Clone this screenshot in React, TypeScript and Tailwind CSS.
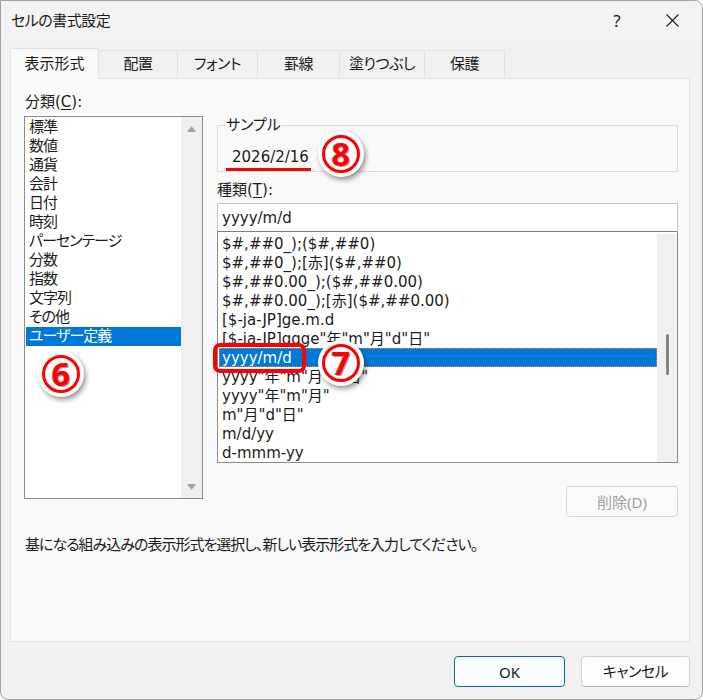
import React from 'react';

const categories = [
    '標準',
    '数値',
    '通貨',
    '会計',
    '日付',
    '時刻',
    'パーセンテージ',
    '分数',
    '指数',
    '文字列',
    'その他',
    'ユーザー定義',
];

const formats = [
    '$#,##0_);($#,##0)',
    '$#,##0_);[赤]($#,##0)',
    '$#,##0.00_);($#,##0.00)',
    '$#,##0.00_);[赤]($#,##0.00)',
    '[$-ja-JP]ge.m.d',
    '[$-ja-JP]ggge"年"m"月"d"日"',
    'yyyy/m/d',
    'yyyy"年"m"月"d"日"',
    'yyyy"年"m"月"',
    'm"月"d"日"',
    'm/d/yy',
    'd-mmm-yy',
];

const tabs = [
    { label: '表示形式', width: 'w-[89px]' },
    { label: '配置', width: 'w-[79px]' },
    { label: 'フォント', width: 'w-[80px]' },
    { label: '罫線', width: 'w-[82px]' },
    { label: '塗りつぶし', width: 'w-[85px]' },
    { label: '保護', width: 'w-[80px]' },
];

// circled step number used as an annotation over the dialog
const StepBadge: React.FC<{ n: string; pos: string }> = ({ n, pos }) => (
    <div className={`absolute ${pos} w-[46px] h-[46px] rounded-full bg-white shadow-[2px_3px_5px_rgba(0,0,0,0.4)] flex items-center justify-center`}>
        <div className="w-[38px] h-[38px] rounded-full border-[3px] border-[#ff0000] flex items-center justify-center">
            <span className="text-[32px] font-bold leading-none text-[#ff0000] font-['Noto_Sans',sans-serif] [text-shadow:-1px_0_0_#a0a0a0,1px_1px_0_#a0a0a0]">
                {n}
            </span>
        </div>
    </div>
);

const App: React.FC = () => {
    return (
        <div className="relative w-[703px] h-[700px] bg-white text-[15px] text-[#1b1b1b] font-['DejaVu_Sans','Noto_Sans_CJK_JP',sans-serif] [font-feature-settings:'palt']">
            <div className="flex flex-col w-[703px] h-[700px] border border-[#a3a3a3] rounded-tr-[8px] rounded-b-[8px] bg-[#f1f1f1] overflow-hidden">
                {/* Title bar */}
                <div className="h-[39px] flex items-center pl-[10px] bg-[#f3f3f3]">
                    <span className="leading-[20px] tracking-[-0.5px]">セルの書式設定</span>
                    <div className="ml-auto flex items-center">
                        <span className="w-[20px] text-center leading-[20px] text-[17px] font-['Noto_Sans',sans-serif]">?</span>
                        <div className="w-[57px] flex justify-center pr-[2px] ml-[18px]">
                            <svg width="13" height="13" viewBox="0 0 13 13" className="text-[#1b1b1b]">
                                <path d="M0.5 0.5 L12.5 12.5 M12.5 0.5 L0.5 12.5" stroke="currentColor" strokeWidth="1.1" />
                            </svg>
                        </div>
                    </div>
                </div>

                <div className="flex-1 flex flex-col pl-[9px] pr-[12px] pt-[8px]">
                    {/* Tabs */}
                    <div className="flex items-end h-[30px]">
                        {tabs.map((tab, i) =>
                            i === 0 ? (
                                <div
                                    key={tab.label}
                                    className={`${tab.width} h-[31px] -mb-px relative z-10 flex items-center justify-center bg-[#f9f9f9] border border-b-0 border-[#e1e1e1] rounded-t-[3px]`}
                                >
                                    {tab.label}
                                </div>
                            ) : (
                                <div
                                    key={tab.label}
                                    className={`${tab.width} h-[28px] flex items-center justify-center bg-[#f1f1f1] border border-b-0 border-l-0 border-[#e1e1e1] tracking-[-0.5px]`}
                                >
                                    {tab.label}
                                </div>
                            )
                        )}
                    </div>

                    {/* Tab panel */}
                    <div className="w-[680px] h-[564px] bg-[#f9f9f9] border border-[#e1e1e1] pl-[13px] pt-[13px] flex flex-col">
                        <div className="flex gap-[14px]">
                            {/* Category column */}
                            <div className="w-[179px] flex flex-col">
                                <div className="h-[24px] leading-[20px] pl-px">
                                    分類(<span className="underline underline-offset-2">C</span>):
                                </div>
                                <div className="h-[383px] border border-[#8c8c8c] bg-white flex">
                                    <div className="flex-1 pt-px pl-px tracking-[-1px]">
                                        {categories.map((c) => (
                                            <div
                                                key={c}
                                                className={`h-[19px] leading-[19px] pl-[3px] ${c === 'ユーザー定義' ? 'bg-[#0078d7] text-white' : ''}`}
                                            >
                                                {c}
                                            </div>
                                        ))}
                                    </div>
                                    <div className="w-[21px] bg-[#f0f0f0] flex flex-col items-center justify-between pt-[9px] pb-[8px]">
                                        <svg width="9" height="6" viewBox="0 0 9 6">
                                            <path d="M0 6 L4.5 0 L9 6 Z" fill="#a3a3a3" />
                                        </svg>
                                        <svg width="9" height="6" viewBox="0 0 9 6">
                                            <path d="M0 0 L4.5 6 L9 0 Z" fill="#a3a3a3" />
                                        </svg>
                                    </div>
                                </div>
                            </div>

                            {/* Format column */}
                            <div className="w-[461px] flex flex-col">
                                <div className="mt-[33px] h-[47px] relative border border-[#dcdcdc] pl-[14px] pt-[21px]">
                                    <span className="absolute -top-[11px] left-[7px] px-px bg-[#f9f9f9] leading-[20px]">サンプル</span>
                                    <div className="leading-[20px]">2026/2/16</div>
                                </div>

                                <div className="h-[31px] pt-[8px] leading-[20px]">
                                    種類(<span className="underline underline-offset-2">T</span>):
                                </div>

                                <div className="h-[29px] bg-white border border-[#c4c4c4] border-b-[#7f7f7f] flex items-center pl-[4px] pt-px">
                                    yyyy/m/d
                                </div>

                                <div className="h-[231px] bg-white border border-t-0 border-[#8c8c8c] flex overflow-hidden">
                                    <div className="flex-1 pt-[2px] pl-px">
                                        {formats.map((f) => (
                                            <div
                                                key={f}
                                                className={`h-[19px] leading-[21px] pl-[3px] whitespace-nowrap ${f === 'yyyy/m/d' ? 'bg-[#0078d7] text-white outline outline-1 -outline-offset-1 outline-dotted outline-[#e0902a]' : ''}`}
                                            >
                                                {f}
                                            </div>
                                        ))}
                                    </div>
                                    <div className="w-[20px] bg-[#f0f0f0] mt-[2px] flex justify-center pt-[100px]">
                                        <div className="w-[3px] h-[41px] rounded-full bg-[#858585]" />
                                    </div>
                                </div>

                                <button className="self-end mt-[23px] w-[112px] h-[31px] rounded-[4px] border border-[#d4d4d4] bg-[#fbfbfb] text-[#9f9f9f] leading-[20px] font-['Noto_Sans','Noto_Sans_CJK_JP',sans-serif]">
                                    削除(D)
                                </button>
                            </div>
                        </div>

                        <div className="mt-[18px] leading-[20px] pl-px tracking-[-1px]">
                            基になる組み込みの表示形式を選択し、新しい表示形式を入力してください。
                        </div>
                    </div>

                    {/* Footer buttons */}
                    <div className="flex justify-end gap-[16px] mt-[14px]">
                        <button className="w-[111px] h-[31px] rounded-[4px] border border-[#0067c0] bg-[#fdfdfd] leading-[20px] font-['Noto_Sans',sans-serif]">
                            OK
                        </button>
                        <button className="w-[109px] h-[31px] rounded-[4px] border border-[#d0d0d0] border-b-[#b5b5b5] bg-[#fdfdfd] leading-[20px] tracking-[-0.5px]">
                            キャンセル
                        </button>
                    </div>
                </div>
            </div>

            {/* Annotations */}
            <div className="absolute left-[226px] top-[168px] w-[85px] h-[3px] bg-[#ff0000]" />
            <div className="absolute left-[213px] top-[343px] w-[93px] h-[30px] border-[4px] border-[#ff0000] rounded-[7px]" />
            <StepBadge n="6" pos="left-[38px] top-[351px]" />
            <StepBadge n="8" pos="left-[318px] top-[131px]" />
            <StepBadge n="7" pos="left-[318px] top-[340px]" />
        </div>
    );
};

export default App;
